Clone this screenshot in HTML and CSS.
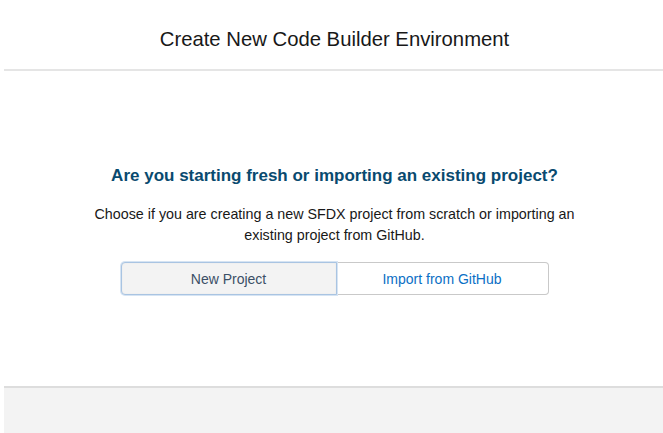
FILE: index.html
```html
<!DOCTYPE html>
<html lang="en">
<head>
<meta charset="utf-8">
<title>Create New Code Builder Environment</title>
<link rel="stylesheet" href="styles.css">
</head>
<body>
<div class="modal">
  <header class="modal-header">
    <h1 class="modal-title">Create New Code Builder Environment</h1>
  </header>
  <main class="modal-content">
    <h2 class="question">Are you starting fresh or importing an existing project?</h2>
    <p class="description">Choose if you are creating a new SFDX project from scratch or importing an existing project from GitHub.</p>
    <div class="choice-group">
      <button class="choice selected" type="button">New Project</button>
      <button class="choice" type="button">Import from GitHub</button>
    </div>
  </main>
  <footer class="modal-footer"></footer>
</div>
</body>
</html>
```
FILE: styles.css
```css
html, body {
  margin: 0;
  padding: 0;
  background: #ffffff;
}
body {
  font-family: "Liberation Sans", Arial, sans-serif;
  overflow: hidden;
}
.modal {
  margin-left: 4px;
  width: 661px;
  height: 433px;
  display: flex;
  flex-direction: column;
  background: #ffffff;
}
.modal-header {
  height: 71px;
  border-bottom: 2px solid #e5e5e5;
  display: flex;
  align-items: center;
  justify-content: center;
  padding-top: 9px;
  box-sizing: border-box;
}
.modal-title {
  margin: 0;
  font-size: 20.3px;
  font-weight: 400;
  color: #181818;
  line-height: 24px;
}
.modal-content {
  height: 315px;
  box-sizing: border-box;
  padding-top: 94px;
  display: flex;
  flex-direction: column;
  align-items: center;
}
.question {
  margin: 0;
  font-size: 17px;
  line-height: 21px;
  font-weight: 700;
  color: #094a6f;
}
.description {
  margin: 18px 0 0;
  max-width: 490px;
  text-align: center;
  font-size: 14.3px;
  line-height: 21px;
  color: #181818;
}
.choice-group {
  margin-top: 16px;
  display: grid;
  grid-template-columns: 216px 212px;
}
.choice {
  height: 33px;
  font-family: inherit;
  font-size: 14px;
  background: #ffffff;
  color: #0b6fc5;
  border: 1px solid #c9c9c9;
  border-left: none;
  border-radius: 0 4px 4px 0;
  padding: 0;
  cursor: pointer;
}
.choice.selected {
  position: relative;
  background: #f3f3f3;
  color: #3b4f66;
  border: 1px solid #a9c4e2;
  border-radius: 4px 0 0 4px;
  box-shadow: 0 0 0 1px #d6e4f3, inset 0 0 2px rgba(0,0,0,0.06);
}
.modal-footer {
  flex: 1;
  background: #f3f3f3;
  border-top: 2px solid #dddddd;
}
```
